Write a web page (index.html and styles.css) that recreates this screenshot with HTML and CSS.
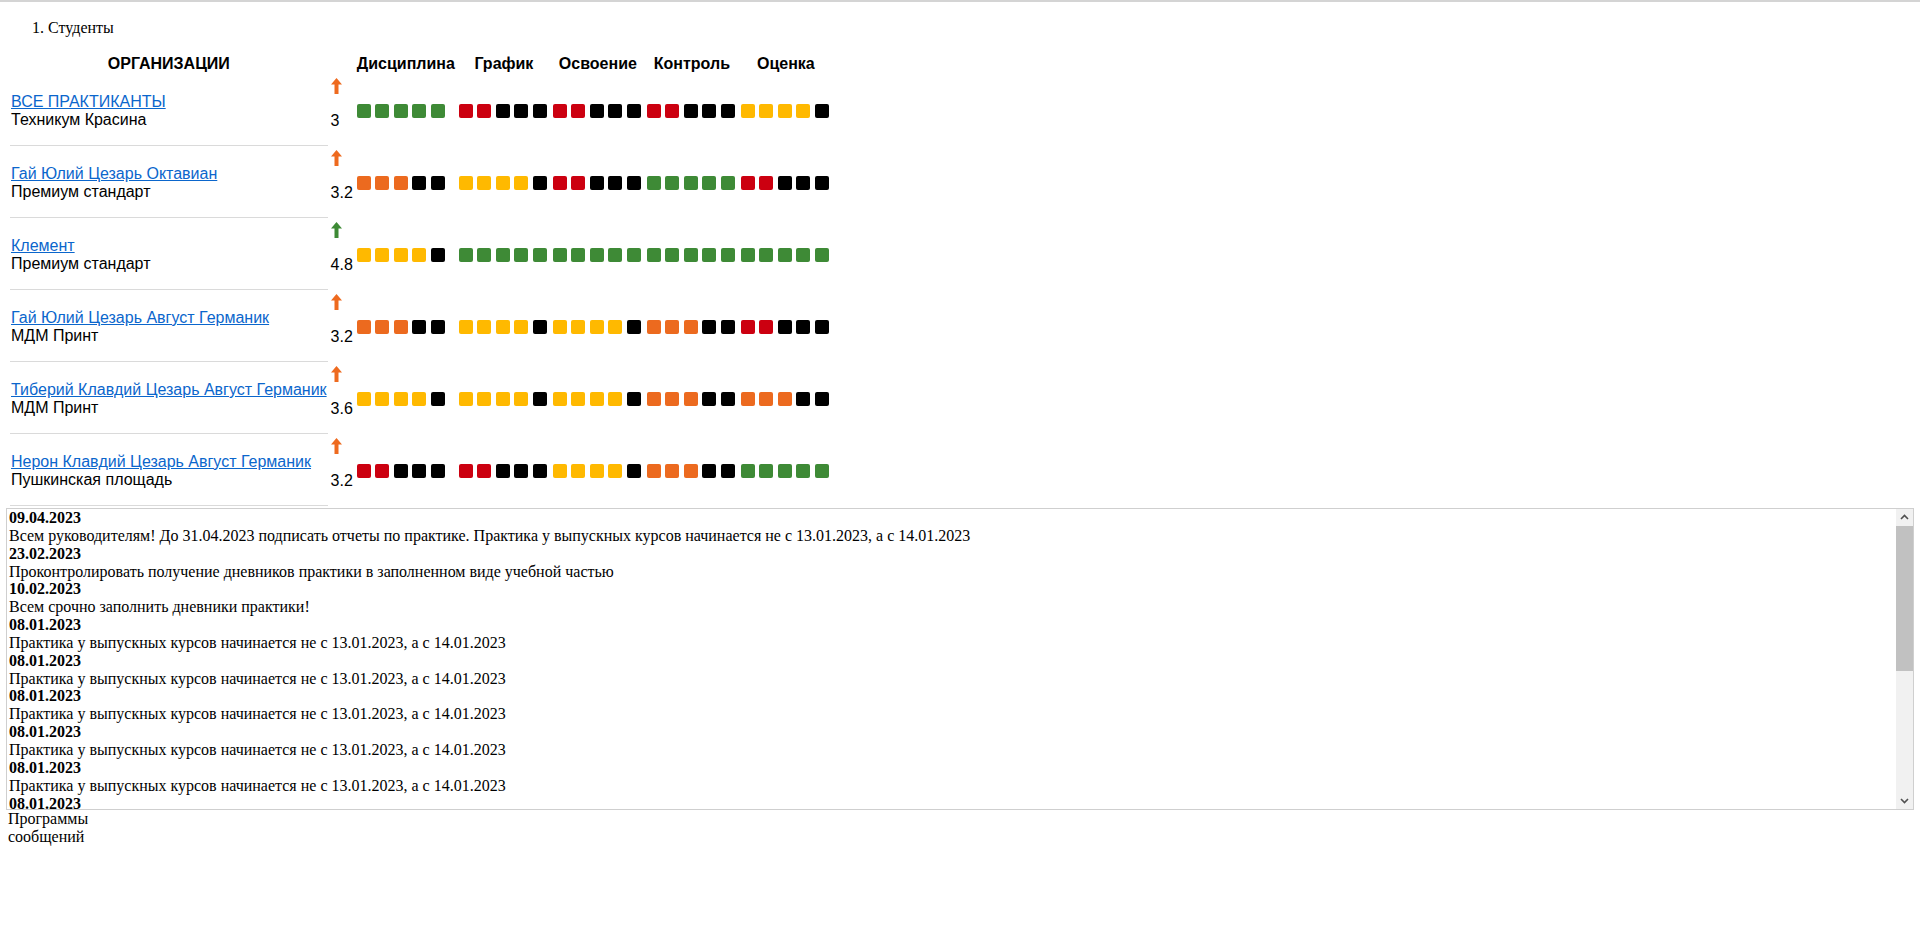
FILE: index.html
```html
<!DOCTYPE html>
<html lang="ru">
<head>
<meta charset="utf-8">
<title>Студенты</title>
<link rel="stylesheet" href="styles.css">
</head>
<body>
<div class="topline"></div>
<div class="page">
  <ol class="menu"><li>Студенты</li></ol>

  <table class="grid">
    <thead>
      <tr>
        <th>ОРГАНИЗАЦИИ</th>
        <th></th>
        <th>Дисциплина</th>
        <th>График</th>
        <th>Освоение</th>
        <th>Контроль</th>
        <th>Оценка</th>
      </tr>
    </thead>
    <tbody>
      <tr>
        <td class="org"><a href="#">ВСЕ ПРАКТИКАНТЫ</a><br>Техникум Красина</td>
        <td class="score"><div class="score-box"><svg class="arrow orange" viewBox="0 0 11 16"><path d="M5.5 0 L11 6.5 H7.5 V16 H3.5 V6.5 H0 Z"/></svg><span class="num">3</span></div></td>
        <td class="sq-cell"><div class="sq-row"><i class="sq g"></i><i class="sq g"></i><i class="sq g"></i><i class="sq g"></i><i class="sq g"></i></div></td>
        <td class="sq-cell"><div class="sq-row"><i class="sq r"></i><i class="sq r"></i><i class="sq k"></i><i class="sq k"></i><i class="sq k"></i></div></td>
        <td class="sq-cell"><div class="sq-row"><i class="sq r"></i><i class="sq r"></i><i class="sq k"></i><i class="sq k"></i><i class="sq k"></i></div></td>
        <td class="sq-cell"><div class="sq-row"><i class="sq r"></i><i class="sq r"></i><i class="sq k"></i><i class="sq k"></i><i class="sq k"></i></div></td>
        <td class="sq-cell"><div class="sq-row"><i class="sq y"></i><i class="sq y"></i><i class="sq y"></i><i class="sq y"></i><i class="sq k"></i></div></td>
      </tr>
      <tr>
        <td class="org"><a href="#">Гай Юлий Цезарь Октавиан</a><br>Премиум стандарт</td>
        <td class="score"><div class="score-box"><svg class="arrow orange" viewBox="0 0 11 16"><path d="M5.5 0 L11 6.5 H7.5 V16 H3.5 V6.5 H0 Z"/></svg><span class="num">3.2</span></div></td>
        <td class="sq-cell"><div class="sq-row"><i class="sq o"></i><i class="sq o"></i><i class="sq o"></i><i class="sq k"></i><i class="sq k"></i></div></td>
        <td class="sq-cell"><div class="sq-row"><i class="sq y"></i><i class="sq y"></i><i class="sq y"></i><i class="sq y"></i><i class="sq k"></i></div></td>
        <td class="sq-cell"><div class="sq-row"><i class="sq r"></i><i class="sq r"></i><i class="sq k"></i><i class="sq k"></i><i class="sq k"></i></div></td>
        <td class="sq-cell"><div class="sq-row"><i class="sq g"></i><i class="sq g"></i><i class="sq g"></i><i class="sq g"></i><i class="sq g"></i></div></td>
        <td class="sq-cell"><div class="sq-row"><i class="sq r"></i><i class="sq r"></i><i class="sq k"></i><i class="sq k"></i><i class="sq k"></i></div></td>
      </tr>
      <tr>
        <td class="org"><a href="#">Клемент</a><br>Премиум стандарт</td>
        <td class="score"><div class="score-box"><svg class="arrow green" viewBox="0 0 11 16"><path d="M5.5 0 L11 6.5 H7.5 V16 H3.5 V6.5 H0 Z"/></svg><span class="num">4.8</span></div></td>
        <td class="sq-cell"><div class="sq-row"><i class="sq y"></i><i class="sq y"></i><i class="sq y"></i><i class="sq y"></i><i class="sq k"></i></div></td>
        <td class="sq-cell"><div class="sq-row"><i class="sq g"></i><i class="sq g"></i><i class="sq g"></i><i class="sq g"></i><i class="sq g"></i></div></td>
        <td class="sq-cell"><div class="sq-row"><i class="sq g"></i><i class="sq g"></i><i class="sq g"></i><i class="sq g"></i><i class="sq g"></i></div></td>
        <td class="sq-cell"><div class="sq-row"><i class="sq g"></i><i class="sq g"></i><i class="sq g"></i><i class="sq g"></i><i class="sq g"></i></div></td>
        <td class="sq-cell"><div class="sq-row"><i class="sq g"></i><i class="sq g"></i><i class="sq g"></i><i class="sq g"></i><i class="sq g"></i></div></td>
      </tr>
      <tr>
        <td class="org"><a href="#">Гай Юлий Цезарь Август Германик</a><br>МДМ Принт</td>
        <td class="score"><div class="score-box"><svg class="arrow orange" viewBox="0 0 11 16"><path d="M5.5 0 L11 6.5 H7.5 V16 H3.5 V6.5 H0 Z"/></svg><span class="num">3.2</span></div></td>
        <td class="sq-cell"><div class="sq-row"><i class="sq o"></i><i class="sq o"></i><i class="sq o"></i><i class="sq k"></i><i class="sq k"></i></div></td>
        <td class="sq-cell"><div class="sq-row"><i class="sq y"></i><i class="sq y"></i><i class="sq y"></i><i class="sq y"></i><i class="sq k"></i></div></td>
        <td class="sq-cell"><div class="sq-row"><i class="sq y"></i><i class="sq y"></i><i class="sq y"></i><i class="sq y"></i><i class="sq k"></i></div></td>
        <td class="sq-cell"><div class="sq-row"><i class="sq o"></i><i class="sq o"></i><i class="sq o"></i><i class="sq k"></i><i class="sq k"></i></div></td>
        <td class="sq-cell"><div class="sq-row"><i class="sq r"></i><i class="sq r"></i><i class="sq k"></i><i class="sq k"></i><i class="sq k"></i></div></td>
      </tr>
      <tr>
        <td class="org"><a href="#">Тиберий Клавдий Цезарь Август Германик</a><br>МДМ Принт</td>
        <td class="score"><div class="score-box"><svg class="arrow orange" viewBox="0 0 11 16"><path d="M5.5 0 L11 6.5 H7.5 V16 H3.5 V6.5 H0 Z"/></svg><span class="num">3.6</span></div></td>
        <td class="sq-cell"><div class="sq-row"><i class="sq y"></i><i class="sq y"></i><i class="sq y"></i><i class="sq y"></i><i class="sq k"></i></div></td>
        <td class="sq-cell"><div class="sq-row"><i class="sq y"></i><i class="sq y"></i><i class="sq y"></i><i class="sq y"></i><i class="sq k"></i></div></td>
        <td class="sq-cell"><div class="sq-row"><i class="sq y"></i><i class="sq y"></i><i class="sq y"></i><i class="sq y"></i><i class="sq k"></i></div></td>
        <td class="sq-cell"><div class="sq-row"><i class="sq o"></i><i class="sq o"></i><i class="sq o"></i><i class="sq k"></i><i class="sq k"></i></div></td>
        <td class="sq-cell"><div class="sq-row"><i class="sq o"></i><i class="sq o"></i><i class="sq o"></i><i class="sq k"></i><i class="sq k"></i></div></td>
      </tr>
      <tr>
        <td class="org"><a href="#">Нерон Клавдий Цезарь Август Германик</a><br>Пушкинская площадь</td>
        <td class="score"><div class="score-box"><svg class="arrow orange" viewBox="0 0 11 16"><path d="M5.5 0 L11 6.5 H7.5 V16 H3.5 V6.5 H0 Z"/></svg><span class="num">3.2</span></div></td>
        <td class="sq-cell"><div class="sq-row"><i class="sq r"></i><i class="sq r"></i><i class="sq k"></i><i class="sq k"></i><i class="sq k"></i></div></td>
        <td class="sq-cell"><div class="sq-row"><i class="sq r"></i><i class="sq r"></i><i class="sq k"></i><i class="sq k"></i><i class="sq k"></i></div></td>
        <td class="sq-cell"><div class="sq-row"><i class="sq y"></i><i class="sq y"></i><i class="sq y"></i><i class="sq y"></i><i class="sq k"></i></div></td>
        <td class="sq-cell"><div class="sq-row"><i class="sq o"></i><i class="sq o"></i><i class="sq o"></i><i class="sq k"></i><i class="sq k"></i></div></td>
        <td class="sq-cell"><div class="sq-row"><i class="sq g"></i><i class="sq g"></i><i class="sq g"></i><i class="sq g"></i><i class="sq g"></i></div></td>
      </tr>
    </tbody>
  </table>

  <div class="news">
    <div class="news-list">
      <div class="news-item"><b>09.04.2023</b><br>Всем руководителям! До 31.04.2023 подписать отчеты по практике. Практика у выпускных курсов начинается не с 13.01.2023, а с 14.01.2023</div>
      <div class="news-item"><b>23.02.2023</b><br>Проконтролировать получение дневников практики в заполненном виде учебной частью</div>
      <div class="news-item"><b>10.02.2023</b><br>Всем срочно заполнить дневники практики!</div>
      <div class="news-item"><b>08.01.2023</b><br>Практика у выпускных курсов начинается не с 13.01.2023, а с 14.01.2023</div>
      <div class="news-item"><b>08.01.2023</b><br>Практика у выпускных курсов начинается не с 13.01.2023, а с 14.01.2023</div>
      <div class="news-item"><b>08.01.2023</b><br>Практика у выпускных курсов начинается не с 13.01.2023, а с 14.01.2023</div>
      <div class="news-item"><b>08.01.2023</b><br>Практика у выпускных курсов начинается не с 13.01.2023, а с 14.01.2023</div>
      <div class="news-item"><b>08.01.2023</b><br>Практика у выпускных курсов начинается не с 13.01.2023, а с 14.01.2023</div>
      <div class="news-item"><b>08.01.2023</b><br>Практика у выпускных курсов начинается не с 13.01.2023, а с 14.01.2023</div>
      <div class="news-item"><b>08.01.2023</b><br>Практика у выпускных курсов начинается не с 13.01.2023, а с 14.01.2023</div>
    </div>
    <div class="scrollbar">
      <div class="sb-btn"><svg viewBox="0 0 17 17" class="chev"><path d="M5 10 L8.5 6.5 L12 10"/></svg></div>
      <div class="sb-track"><div class="sb-thumb"></div></div>
      <div class="sb-btn"><svg viewBox="0 0 17 17" class="chev"><path d="M5 7 L8.5 10.5 L12 7"/></svg></div>
    </div>
  </div>

  <div class="programs">Программы<br>сообщений</div>
</div>
</body>
</html>
```

FILE: styles.css
```css
html, body {
  margin: 0;
  padding: 0;
  background: #fff;
}

body {
  font-family: "Liberation Serif", "Times New Roman", serif;
  font-size: 16px;
  color: #000;
}

.topline {
  height: 2px;
  background: #d4d4d4;
}

.page {
  padding: 0 8px;
}

.menu {
  margin: 17px 0 15px;
  padding-left: 40px;
}

.grid {
  font-family: "Liberation Sans", Arial, sans-serif;
  font-size: 16px;
  border-spacing: 2px;
}

.grid th {
  padding: 1px;
  font-weight: bold;
  text-align: center;
}

.grid td {
  padding: 1px;
  vertical-align: middle;
}

.grid td.org {
  border-bottom: 1px solid #dadada;
  white-space: nowrap;
  padding-top: 2px;
}

.org a {
  color: #0b66cc;
  text-decoration: underline;
}

.grid td.score {
  vertical-align: top;
}

.score-box {
  height: 68px;
  display: flex;
  flex-direction: column;
  align-items: flex-start;
}

.arrow {
  width: 11px;
  height: 16px;
  margin-top: 1px;
  display: block;
}

.arrow.orange { fill: #ee6a1f; }
.arrow.green { fill: #3d8a35; }

.num {
  margin-top: 18px;
  line-height: 18.4px;
}

.sq-row {
  width: 90px;
  display: flex;
  gap: 4.5px;
}

.sq {
  width: 14px;
  height: 14px;
  border-radius: 2px;
  display: block;
}

.sq.g { background: #3e8a36; }
.sq.r { background: #cc0010; }
.sq.k { background: #000; }
.sq.y { background: #ffb900; }
.sq.o { background: #ec6a1f; }

.news {
  margin: 0 -2px;
  height: 300px;
  border: 1px solid #cfcfcf;
  display: flex;
}

.news-list {
  flex: 1;
  overflow: hidden;
  padding-left: 2px;
  line-height: 17.85px;
}

.scrollbar {
  width: 17px;
  display: flex;
  flex-direction: column;
  background: #f1f1f1;
}

.sb-btn {
  height: 17px;
  flex: none;
}

.chev {
  width: 17px;
  height: 17px;
  display: block;
  fill: none;
  stroke: #505050;
  stroke-width: 1.6;
}

.sb-track {
  flex: 1;
}

.sb-thumb {
  height: 145px;
  background: #c1c1c1;
}

.programs {
  line-height: 18.4px;
}
```
